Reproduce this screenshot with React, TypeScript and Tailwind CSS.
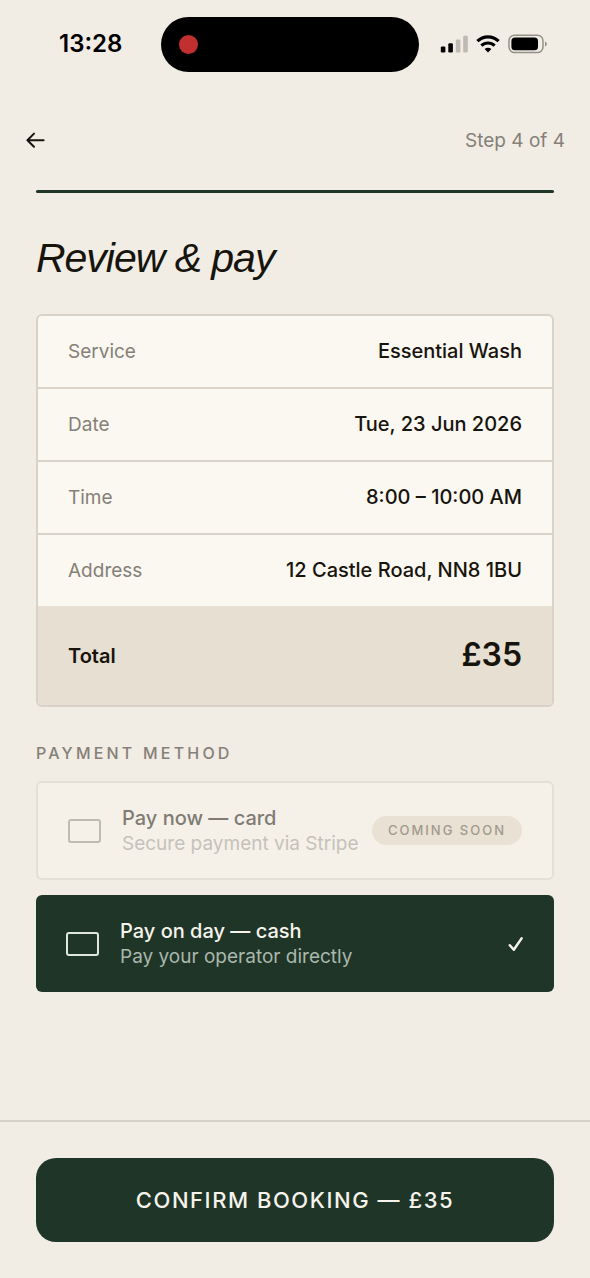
import { useState } from "react";

interface SummaryRow {
  label: string;
  value: string;
}

interface PaymentOptionProps {
  id: string;
  title: string;
  subtitle: string;
  selected: boolean;
  comingSoon?: boolean;
  onSelect: (id: string) => void;
}

const ROWS: SummaryRow[] = [
  { label: "Service", value: "Essential Wash" },
  { label: "Date", value: "Tue, 23 Jun 2026" },
  { label: "Time", value: "8:00 – 10:00 AM" },
  { label: "Address", value: "12 Castle Road, NN8 1BU" },
];

const METHODS = [
  {
    id: "card",
    title: "Pay now — card",
    subtitle: "Secure payment via Stripe",
    comingSoon: true,
  },
  {
    id: "cash",
    title: "Pay on day — cash",
    subtitle: "Pay your operator directly",
  },
];

function StatusBar() {
  return (
    <div className="flex h-[88px] items-center pl-[59px] pr-[42px] text-black">
      <span className="w-[102px] text-2xl font-semibold">13:28</span>
      <div className="flex h-[55px] w-[258px] items-center rounded-full bg-black px-[18px]">
        <span className="size-[19px] rounded-full bg-[#c22f31]" />
      </div>
      <div className="ml-auto flex items-center gap-2">
        <svg width="28" height="18" viewBox="0 0 28 18" aria-hidden="true">
          <rect x="0.8" y="11.5" width="4.6" height="6" rx="1.2" />
          <rect x="8.3" y="8.3" width="4.6" height="9.2" rx="1.2" />
          <rect x="15.8" y="4.5" width="4.6" height="13" rx="1.2" fill="#bfbab3" />
          <rect x="23.2" y="0.8" width="4.6" height="16.7" rx="1.2" fill="#bfbab3" />
        </svg>
        <svg
          width="24"
          height="18"
          viewBox="0 0 24 18"
          fill="none"
          stroke="currentColor"
          strokeWidth="3.2"
          aria-hidden="true"
        >
          <path d="M1.4 6.2a15.4 15.4 0 0 1 21.2 0" />
          <path d="M5.4 10.7a9.4 9.4 0 0 1 13.2 0" />
          <path
            d="M12 17.6l-3.4-3.5a4.9 4.9 0 0 1 6.8 0z"
            fill="currentColor"
            stroke="none"
          />
        </svg>
        <svg width="40" height="20" viewBox="0 0 40 20" aria-hidden="true">
          <rect
            x="1"
            y="1.2"
            width="34"
            height="17.4"
            rx="5.6"
            fill="none"
            stroke="#94908a"
            strokeWidth="1.5"
          />
          <rect x="3.4" y="3.5" width="26.6" height="12.8" rx="3.6" />
          <path d="M37 7.5c2.4.9 2.4 4.1 0 5z" fill="#94908a" />
        </svg>
      </div>
    </div>
  );
}

function PaymentOption({
  id,
  title,
  subtitle,
  selected,
  comingSoon,
  onSelect,
}: PaymentOptionProps) {
  return (
    <label
      htmlFor={id}
      className={
        selected
          ? "relative flex items-center rounded-md bg-[#1f3528] px-[30px] py-[23px] text-[#f6f3ec]"
          : "relative flex items-center rounded-md border-2 border-[#e5e0d7] bg-[#f5f1e8] px-[30px] py-[22px] text-[#7f7c75]"
      }
    >
      <input
        type="radio"
        id={id}
        name="payment"
        className="sr-only"
        checked={selected}
        disabled={comingSoon}
        onChange={() => onSelect(id)}
      />
      <span
        className={
          selected
            ? "mr-[21px] h-6 w-[33px] shrink-0 rounded-[3px] border-2 border-[#dfe6dc]"
            : "mr-[21px] h-6 w-[33px] shrink-0 rounded-[3px] border-2 border-[#bfbbb3]"
        }
      />
      <span className="flex grow flex-col whitespace-nowrap">
        <span className="text-xl leading-[26px] font-medium">{title}</span>
        <span
          className={
            selected
              ? "text-[19px] leading-[25px] text-[#aab8ac]"
              : "text-[19px] leading-[25px] text-[#c5c2bb]"
          }
        >
          {subtitle}
        </span>
      </span>
      {comingSoon && (
        <span className="rounded-full bg-[#e9e1d3] px-4 py-1 text-[13px] leading-[21px] font-medium tracking-[2px] whitespace-nowrap text-[#a19a8d] uppercase">
          Coming soon
        </span>
      )}
      {selected && (
        <svg
          width="16"
          height="16"
          viewBox="0 0 16 16"
          fill="none"
          stroke="currentColor"
          strokeWidth="2.5"
          strokeLinecap="round"
          strokeLinejoin="round"
          aria-hidden="true"
        >
          <path d="M1.8 9.2l4 4.6L13.6 2.4" />
        </svg>
      )}
    </label>
  );
}

export default function App() {
  const [method, setMethod] = useState("cash");

  return (
    <div className="flex min-h-screen flex-col bg-[#f1ece4] font-['Inter',sans-serif] text-[#17140d]">
      <StatusBar />

      <header className="flex items-center justify-between px-[25px] pt-9 text-[19px] leading-[33px]">
        <button type="button" aria-label="Back">
          <svg
            width="21"
            height="18"
            viewBox="0 0 21 18"
            fill="none"
            stroke="currentColor"
            strokeWidth="2"
            strokeLinecap="round"
            strokeLinejoin="round"
          >
            <path d="M18.6 8.2H2.4M9 1.6L2.4 8.2L9 14.8" />
          </svg>
        </button>
        <span className="text-[#858078]">Step 4 of 4</span>
      </header>

      <main className="flex grow flex-col px-9 pt-[33px]">
        <div className="h-[3px] rounded-full bg-[#1f3528]" />
        <h1 className="mt-[41px] font-['Liberation_Sans',sans-serif] text-[41px] leading-[48px] tracking-tight italic">
          Review &amp; pay
        </h1>

        <dl className="mt-8 overflow-hidden rounded-md border-2 border-[#d8d2c8] bg-[#fbf7f1] text-xl">
          {ROWS.map(({ label, value }) => (
            <div
              key={label}
              className="flex items-baseline justify-between border-b-2 border-[#d8d2c8] px-[30px] py-[21px] leading-[29px]"
            >
              <dt className="text-[19px] leading-[29px] text-[#858078]">
                {label}
              </dt>
              <dd className="font-medium">{value}</dd>
            </div>
          ))}
          <div className="-mt-0.5 flex h-[99px] items-center justify-between bg-[#e7dfd2] px-[30px]">
            <dt className="font-semibold">Total</dt>
            <dd className="text-[32px] font-semibold">£35</dd>
          </div>
        </dl>

        <fieldset className="mt-[34px] flex min-w-0 flex-col gap-[15px]">
          <legend className="mb-4 text-base leading-6 font-medium tracking-[0.2em] text-[#858078] uppercase">
            Payment method
          </legend>
          {METHODS.map((option) => (
            <PaymentOption
              key={option.id}
              {...option}
              selected={method === option.id}
              onSelect={setMethod}
            />
          ))}
        </fieldset>
      </main>

      <footer className="border-t-2 border-[#d5d0c8] px-9 py-9">
        <button
          type="button"
          className="h-[84px] w-full rounded-[20px] bg-[#1f3528] text-[22px] font-medium tracking-[0.07em] text-[#f6f3ec]"
        >
          CONFIRM BOOKING — £35
        </button>
      </footer>
    </div>
  );
}
